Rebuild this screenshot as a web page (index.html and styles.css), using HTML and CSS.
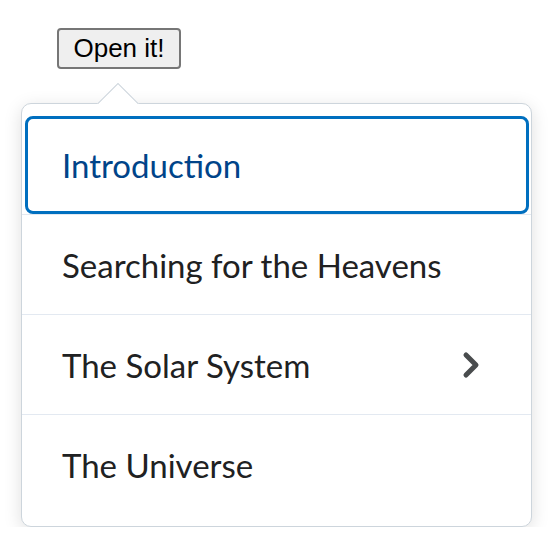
FILE: index.html
```html
<!DOCTYPE html>
<html>
<head>
<meta charset="utf-8">
<link rel="stylesheet" href="styles.css">
</head>
<body>
<div class="page">
  <button class="btn">Open it!</button>
  <div class="dropdown">
    <div class="arrow"><div class="arrow-sq"></div></div>
    <ul class="menu">
      <li class="item focused">Introduction</li>
      <li class="item">Searching for the Heavens</li>
      <li class="item has-sub">The Solar System
        <svg class="chev" width="20" height="30" viewBox="0 0 20 30"><path d="M5 5 L15 15 L5 25" fill="none" stroke="#494c4e" stroke-width="5" stroke-linecap="round" stroke-linejoin="round"/></svg>
      </li>
      <li class="item">The Universe</li>
    </ul>
  </div>
</div>
</body>
</html>
```
FILE: styles.css
```css
html, body {
  margin: 0;
  padding: 0;
  background: #fff;
}
.page {
  padding: 28px 21px 0 21px;
}
.btn {
  display: block;
  margin-left: 36px;
  font-family: "Liberation Sans", Arial, sans-serif;
  font-size: 26px;
  line-height: 30px;
  padding: 3px 14px 4px;
  color: #000;
  background: #efefef;
  border: 2px solid #767676;
  border-radius: 4px;
  width: 124px;
}
.dropdown {
  position: relative;
  margin-top: 34px;
  width: 511px;
}
.menu {
  list-style: none;
  margin: 0;
  padding: 11px 0 12px;
  background: #fff;
  border: 1px solid #cdd5dc;
  border-radius: 10px;
  box-shadow: 0 4px 18px rgba(0, 0, 0, 0.13);
  font-family: Lato, "Noto Sans", sans-serif;
}
.arrow {
  position: absolute;
  top: -20px;
  left: 76px;
  width: 42px;
  height: 21px;
  overflow: hidden;
  z-index: 2;
}
.arrow-sq {
  position: absolute;
  left: 6px;
  top: 6px;
  width: 28px;
  height: 28px;
  background: #fff;
  border: 1px solid #cdd5dc;
  transform: rotate(45deg);
}
.item {
  position: relative;
  height: 99px;
  display: flex;
  align-items: center;
  justify-content: space-between;
  padding: 0 50px 0 40px;
  font-size: 33px;
  color: #202122;
  border-top: 1px solid #e3e9f1;
}
.item:first-child {
  border-top: none;
}
.item.focused {
  color: #004489;
}
.item.focused::after {
  content: "";
  position: absolute;
  top: 1px;
  bottom: 0;
  left: 3px;
  right: 2px;
  border: 3px solid #006fbf;
  border-radius: 8px;
}
.chev {
  display: block;
}
```
